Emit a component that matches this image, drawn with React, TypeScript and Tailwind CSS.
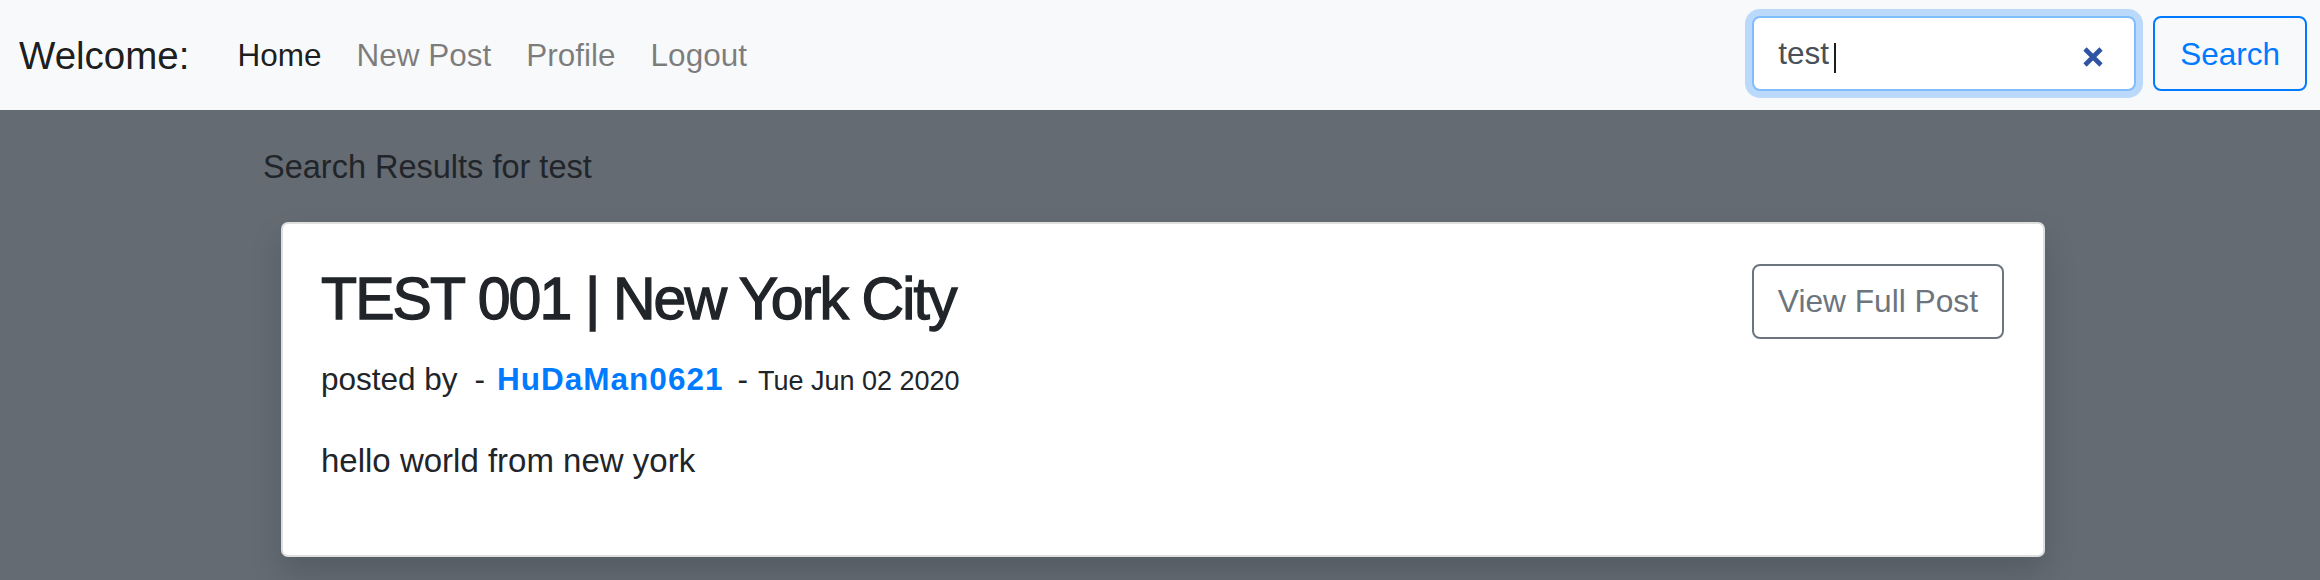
import React from "react";

const links = [
  { label: "Home", active: true },
  { label: "New Post", active: false },
  { label: "Profile", active: false },
  { label: "Logout", active: false },
];

const ClearIcon: React.FC = () => (
  <svg
    width="22"
    height="22"
    viewBox="0 0 22 22"
    className="absolute right-[30px] top-[28px]"
  >
    <path d="M3 3 L19 19 M19 3 L3 19" stroke="#2f54a3" strokeWidth="4.6" strokeLinecap="butt" />
  </svg>
);

const App: React.FC = () => {
  return (
    <div className="min-h-[580px] bg-[#646b73] font-['Liberation_Sans',Arial,sans-serif] text-[#212529]">
      {/* Navbar */}
      <nav className="flex h-[110px] items-center bg-[#f8f9fa] pl-[19px] pr-[13px]">
        <span className="mr-[48px] text-[38.5px] leading-[59px] text-black/90">Welcome:</span>
        <ul className="flex gap-[35px] text-[31.5px] leading-[47px]">
          {links.map((l) => (
            <li key={l.label} className={l.active ? "text-black/90" : "text-black/50"}>
              {l.label}
            </li>
          ))}
        </ul>
        <form className="mb-[3px] ml-auto flex items-center gap-[17px]">
          <div className="relative flex h-[75px] w-[384px] items-center rounded-[8px] border-2 border-[#80bdff] bg-white pl-[24px] text-[31.5px] text-[#495057] shadow-[0_0_0_7px_rgba(0,123,255,0.25)]">
            <span>test</span>
            <span className="ml-[5px] mt-[8px] h-[30px] w-[2px] bg-[#1d1d1d]" />
            <ClearIcon />
          </div>
          <button
            type="button"
            className="h-[75px] rounded-[8px] border-2 border-[#007bff] px-[25px] pt-[3px] text-[31.5px] text-[#007bff]"
          >
            Search
          </button>
        </form>
      </nav>

      {/* Results */}
      <main className="ml-[263px] mr-[275px] pt-[33.5px]">
        <h5 className="text-[32.5px] leading-[47px] text-[#212529]">Search Results for test</h5>

        <div className="ml-[18px] mt-[31.5px] rounded-[7px] border-2 border-black/[0.125] bg-white pb-[70px] pl-[38px] pr-[39px] pt-[38px] shadow-[0_16px_32px_rgba(0,0,0,0.15)]">
          <div className="flex items-start justify-between">
            <h2 className="text-[59px] leading-[75px] tracking-[-0.032em] [-webkit-text-stroke:1.3px_#212529]">
              TEST 001 | New York City
            </h2>
            <button
              type="button"
              className="mt-[2px] h-[75px] rounded-[8px] border-2 border-[#6c757d] px-[24px] text-[31.7px] text-[#6c757d]"
            >
              View Full Post
            </button>
          </div>

          <p className="mt-[16.5px] text-[31.5px] leading-[47px]">
            posted by
            <span className="ml-[17px] mr-[12px]">-</span>
            <a href="#" className="font-bold tracking-[1px] text-[#007bff]">
              HuDaMan0621
            </a>
            <span className="ml-[14px] mr-[10px]">-</span>
            <small className="text-[27px]">Tue Jun 02 2020</small>
          </p>

          <p className="mt-[32px] text-[33px] leading-[48.75px]">hello world from new york</p>
        </div>
      </main>
    </div>
  );
};

export default App;
